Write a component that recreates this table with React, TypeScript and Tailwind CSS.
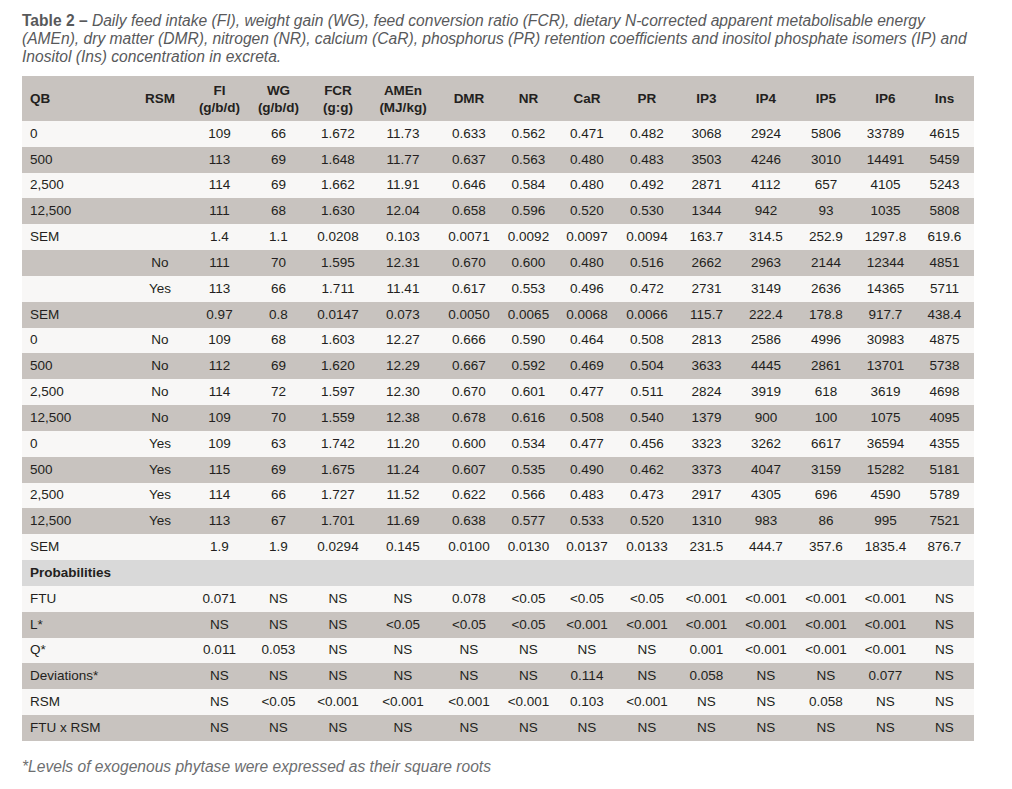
import React from "react";

const COLS =
  "grid grid-cols-[108px_60px_59px_59px_60px_70px_62px_57px_60px_60px_59px_60px_60px_59px_59px]";

type Row = { cells: string[]; bg: "l" | "d" | "p"; bold?: boolean };

const raw: [string, string[], ("l" | "d" | "p")][] = [
  ["0|", "109 66 1.672 11.73 0.633 0.562 0.471 0.482 3068 2924 5806 33789 4615".split(" "), "l"],
  ["500|", "113 69 1.648 11.77 0.637 0.563 0.480 0.483 3503 4246 3010 14491 5459".split(" "), "d"],
  ["2,500|", "114 69 1.662 11.91 0.646 0.584 0.480 0.492 2871 4112 657 4105 5243".split(" "), "l"],
  ["12,500|", "111 68 1.630 12.04 0.658 0.596 0.520 0.530 1344 942 93 1035 5808".split(" "), "d"],
  ["SEM|", "1.4 1.1 0.0208 0.103 0.0071 0.0092 0.0097 0.0094 163.7 314.5 252.9 1297.8 619.6".split(" "), "l"],
  ["|No", "111 70 1.595 12.31 0.670 0.600 0.480 0.516 2662 2963 2144 12344 4851".split(" "), "d"],
  ["|Yes", "113 66 1.711 11.41 0.617 0.553 0.496 0.472 2731 3149 2636 14365 5711".split(" "), "l"],
  ["SEM|", "0.97 0.8 0.0147 0.073 0.0050 0.0065 0.0068 0.0066 115.7 222.4 178.8 917.7 438.4".split(" "), "d"],
  ["0|No", "109 68 1.603 12.27 0.666 0.590 0.464 0.508 2813 2586 4996 30983 4875".split(" "), "l"],
  ["500|No", "112 69 1.620 12.29 0.667 0.592 0.469 0.504 3633 4445 2861 13701 5738".split(" "), "d"],
  ["2,500|No", "114 72 1.597 12.30 0.670 0.601 0.477 0.511 2824 3919 618 3619 4698".split(" "), "l"],
  ["12,500|No", "109 70 1.559 12.38 0.678 0.616 0.508 0.540 1379 900 100 1075 4095".split(" "), "d"],
  ["0|Yes", "109 63 1.742 11.20 0.600 0.534 0.477 0.456 3323 3262 6617 36594 4355".split(" "), "l"],
  ["500|Yes", "115 69 1.675 11.24 0.607 0.535 0.490 0.462 3373 4047 3159 15282 5181".split(" "), "d"],
  ["2,500|Yes", "114 66 1.727 11.52 0.622 0.566 0.483 0.473 2917 4305 696 4590 5789".split(" "), "l"],
  ["12,500|Yes", "113 67 1.701 11.69 0.638 0.577 0.533 0.520 1310 983 86 995 7521".split(" "), "d"],
  ["SEM|", "1.9 1.9 0.0294 0.145 0.0100 0.0130 0.0137 0.0133 231.5 444.7 357.6 1835.4 876.7".split(" "), "l"],
  ["Probabilities|", [], "p"],
  ["FTU|", "0.071 NS NS NS 0.078 <0.05 <0.05 <0.05 <0.001 <0.001 <0.001 <0.001 NS".split(" "), "l"],
  ["L*|", "NS NS NS <0.05 <0.05 <0.05 <0.001 <0.001 <0.001 <0.001 <0.001 <0.001 NS".split(" "), "d"],
  ["Q*|", "0.011 0.053 NS NS NS NS NS NS 0.001 <0.001 <0.001 <0.001 NS".split(" "), "l"],
  ["Deviations*|", "NS NS NS NS NS NS 0.114 NS 0.058 NS NS 0.077 NS".split(" "), "d"],
  ["RSM|", "NS <0.05 <0.001 <0.001 <0.001 <0.001 0.103 <0.001 NS NS 0.058 NS NS".split(" "), "l"],
  ["FTU x RSM|", "NS NS NS NS NS NS NS NS NS NS NS NS NS".split(" "), "d"],
];

const rows: Row[] = raw.map(([a, vals, bg]) => {
  const [qb, rsm] = a.split("|");
  const filled = vals.length ? vals : Array(13).fill("");
  return { cells: [qb, rsm, ...filled], bg, bold: bg === "p" };
});

const headers: [string, string?][] = [
  ["FI", "(g/b/d)"],
  ["WG", "(g/b/d)"],
  ["FCR", "(g:g)"],
  ["AMEn", "(MJ/kg)"],
  ["DMR"],
  ["NR"],
  ["CaR"],
  ["PR"],
  ["IP3"],
  ["IP4"],
  ["IP5"],
  ["IP6"],
  ["Ins"],
];

export default function App() {
  return (
    <div
      className="w-[1012px] h-[789px] bg-white overflow-hidden"
      style={{ fontFamily: '"Liberation Sans", Arial, sans-serif' }}
    >
      <p className="ml-[22px] pt-[12px] w-[955px] text-[15.6px] leading-[18px] text-[#58595b]">
        <b className="font-bold">Table 2 –</b>{" "}
        <i className="italic">
          Daily feed intake (FI), weight gain (WG), feed conversion ratio (FCR), dietary N-corrected apparent metabolisable energy (AMEn), dry matter (DMR), nitrogen (NR), calcium (CaR), phosphorus (PR) retention coefficients and inositol phosphate isomers (IP) and Inositol (Ins) concentration in excreta.
        </i>
      </p>

      <div className="ml-[22px] mt-[10px] w-[952px] text-[13.5px] text-[#231f20]">
        <div className={`${COLS} h-[45px] bg-[#c8c3bf] font-bold leading-[17px]`}>
          <div className="flex items-center pl-[8px]">QB</div>
          <div className="flex items-center justify-center">RSM</div>
          {headers.map(([a, b], i) => (
            <div key={i} className="flex flex-col items-center justify-center">
              <span>{a}</span>
              {b && <span>{b}</span>}
            </div>
          ))}
        </div>
        {rows.map((r, ri) => (
          <div
            key={ri}
            className={`${COLS} h-[25.83px] ${
              r.bg === "l" ? "bg-[#f8f7f6]" : r.bg === "d" ? "bg-[#c8c3bf]" : "bg-[#d9d9d9]"
            }`}
          >
            {r.cells.map((c, ci) =>
              ci === 0 ? (
                <div
                  key={ci}
                  className={`flex items-center pl-[8px] whitespace-nowrap ${r.bold ? "font-bold" : ""}`}
                >
                  {c}
                </div>
              ) : (
                <div key={ci} className="flex items-center justify-center whitespace-nowrap">
                  {c}
                </div>
              )
            )}
          </div>
        ))}
      </div>

      <div className="pl-[22px] mt-[17px] text-[15.6px] leading-[18px] italic text-[#6d6e70]">
        *Levels of exogenous phytase were expressed as their square roots
      </div>
    </div>
  );
}
